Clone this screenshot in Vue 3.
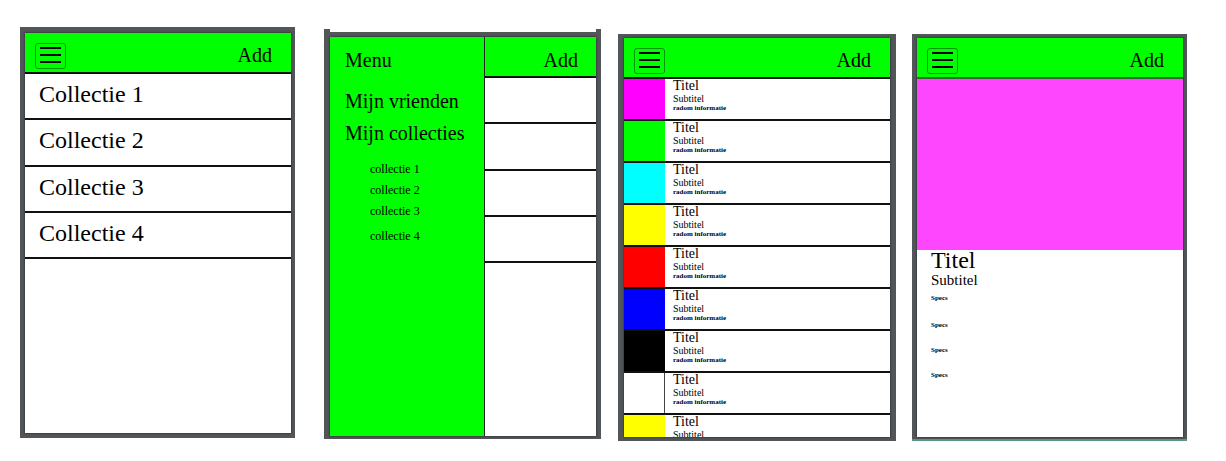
<script setup>
const collections = [1, 2, 3, 4]
const items = ['#ff00ff', '#00ff00', '#00ffff', '#ffff00', '#ff0000', '#0000ff', '#000000', '#ffffff', '#ffff00']
const specs = [1, 2, 3, 4]
</script>

<template>
  <main class="boards">
    <section class="frame frame-list">
      <div class="screen">
        <header class="bar">
          <button class="burger" type="button" aria-label="Menu"><i></i><i></i><i></i></button>
          <button class="add" type="button">Add</button>
        </header>
        <ul class="rows">
          <li v-for="n in collections" :key="n">Collectie {{ n }}</li>
        </ul>
      </div>
    </section>

    <section class="frame frame-menu">
      <div class="sliver"></div>
      <div class="screen split">
        <nav class="menu">
          <h2>Menu</h2>
          <a href="#vrienden">Mijn vrienden</a>
          <a href="#collecties">Mijn collecties</a>
          <ul>
            <li v-for="n in collections" :key="n"><a href="#collectie">collectie {{ n }}</a></li>
          </ul>
        </nav>
        <div class="behind">
          <header class="bar">
            <button class="add" type="button">Add</button>
          </header>
          <ul class="rows">
            <li v-for="n in collections" :key="n"></li>
          </ul>
        </div>
      </div>
    </section>

    <section class="frame frame-items">
      <div class="screen">
        <header class="bar">
          <button class="burger" type="button" aria-label="Menu"><i></i><i></i><i></i></button>
          <button class="add" type="button">Add</button>
        </header>
        <ul class="items">
          <li v-for="(color, i) in items" :key="i">
            <span class="swatch" :class="{ outlined: color === '#ffffff' }" :style="{ background: color }"></span>
            <div>
              <h3>Titel</h3>
              <h4>Subtitel</h4>
              <p>radom informatie</p>
            </div>
          </li>
        </ul>
      </div>
    </section>

    <section class="frame frame-detail">
      <div class="screen">
        <header class="bar soft">
          <button class="burger" type="button" aria-label="Menu"><i></i><i></i><i></i></button>
          <button class="add" type="button">Add</button>
        </header>
        <div class="photo"></div>
        <article class="detail">
          <h1>Titel</h1>
          <h2>Subtitel</h2>
          <ul>
            <li v-for="n in specs" :key="n">Specs</li>
          </ul>
        </article>
      </div>
    </section>
  </main>
</template>

<style>
body {
  background: #fff;
}
</style>

<style scoped>
.boards {
  display: grid;
  grid-template-columns: 275fr 29px 277fr 17px 278fr 16px 275fr;
  align-items: start;
  padding: 27px 39px 20px 20px;
  font-family: "Liberation Serif", "Times New Roman", serif;
  color: #000;
}
h1, h2, h3, h4, p, ul {
  margin: 0;
  padding: 0;
  font-weight: 400;
}
ul {
  list-style: none;
}
a {
  color: inherit;
  text-decoration: none;
}
.frame {
  background: #525659;
  min-width: 0;
}
.frame-list {
  grid-column: 1;
  padding: 6px 4px 5px 5px;
}
.frame-menu {
  grid-column: 3;
  margin-top: 2px;
  padding: 0 5px 3px 6px;
}
.frame-items {
  grid-column: 5;
  margin-top: 7px;
  padding: 4px 6px;
}
.frame-detail {
  grid-column: 7;
  margin-top: 7px;
  padding: 4px 4px 2px 5px;
  border-bottom: 2px solid #5a9483;
}
.sliver {
  height: 3px;
  margin-bottom: 5px;
  background: #fff;
}
.screen {
  aspect-ratio: 266 / 399;
  min-height: 0;
  overflow: hidden;
  background: #fff;
  box-shadow: 0 0 2px #1c1f21;
}
.frame-list .screen {
  aspect-ratio: 266 / 400;
}
.bar {
  display: flex;
  align-items: flex-start;
  justify-content: space-between;
  box-sizing: border-box;
  height: 41px;
  padding: 10px 19px 0 10px;
  background: #0f0;
  border-bottom: 2px solid #001400;
}
.bar.soft {
  border-bottom-color: #2c6a2c;
}
.behind .bar {
  padding: 11px 18px 0 10px;
}
.burger {
  display: flex;
  flex-direction: column;
  justify-content: space-between;
  box-sizing: border-box;
  width: 31px;
  height: 26px;
  padding: 3px 4px 5px;
  background: transparent;
  border: 1px solid #009800;
  border-radius: 3px;
}
.burger i {
  height: 2px;
  background: #000;
}
.add {
  margin-left: auto;
  padding: 0;
  border: 0;
  background: transparent;
  font: 20px/24px "Liberation Serif", "Times New Roman", serif;
  color: #000;
}
.rows {
  display: grid;
  grid-template-rows: repeat(4, 1fr);
  height: 185px;
}
.rows li {
  box-sizing: border-box;
  padding: 6px 14px 0;
  border-bottom: 2px solid #111;
  font-size: 24px;
  line-height: 28px;
}
.split {
  display: flex;
}
.menu {
  box-sizing: border-box;
  width: 58%;
  padding: 11px 0 0 15px;
  background: #0f0;
  font-size: 20px;
  line-height: 24px;
}
.menu h2 {
  margin-bottom: 17px;
  font-size: 20px;
}
.menu > a {
  display: block;
  margin-bottom: 8px;
}
.menu ul {
  padding: 9px 0 0 25px;
  font-size: 12px;
  line-height: 15px;
}
.menu li {
  margin-bottom: 6px;
}
.menu li:last-child {
  padding-top: 4px;
}
.menu li a {
  display: block;
}
.behind {
  flex: 1;
  border-left: 1px solid #222;
}
.items li {
  display: flex;
  gap: 8px;
  box-sizing: border-box;
  height: 42px;
  border-bottom: 2px solid #111;
}
.items li > div {
  padding-top: 1px;
}
.swatch {
  box-sizing: border-box;
  width: 41px;
}
.swatch.outlined {
  border-right: 1px solid #444;
}
.items h3 {
  font-size: 14px;
  line-height: 12px;
}
.items h4 {
  font-size: 10px;
  line-height: 13px;
}
.items p {
  font-size: 7px;
  font-weight: 700;
  line-height: 7px;
}
.photo {
  aspect-ratio: 266 / 171;
  background: #ff46ff;
}
.detail {
  padding: 0 14px;
}
.detail h1 {
  font-size: 24px;
  line-height: 20px;
}
.detail h2 {
  font-size: 15px;
  line-height: 20px;
}
.detail ul {
  padding-top: 4px;
  font-size: 7px;
  font-weight: 700;
  line-height: 9px;
}
.detail li {
  margin-bottom: 16px;
}
.detail li:first-child {
  margin-bottom: 18px;
}
</style>
